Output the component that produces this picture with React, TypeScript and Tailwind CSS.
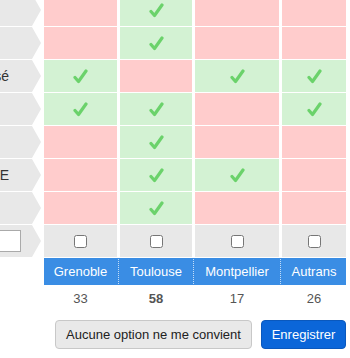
import React from "react";

type C = "p" | "g";
const rows: { label: string; cells: C[] }[] = [
  { label: "", cells: ["p", "g", "p", "p"] },
  { label: "", cells: ["p", "g", "p", "p"] },
  { label: "Non précisé", cells: ["g", "p", "g", "g"] },
  { label: "", cells: ["g", "g", "p", "g"] },
  { label: "", cells: ["p", "g", "p", "p"] },
  { label: "STAGE LIBRE", cells: ["p", "g", "g", "p"] },
  { label: "", cells: ["p", "g", "p", "p"] },
];

const widths = ["w-[73px]", "w-[72px]", "w-[84px]", "w-[64px]"];
const cities = ["Grenoble", "Toulouse", "Montpellier", "Autrans"];
const counts = ["33", "58", "17", "26"];

const arrow =
  "[clip-path:polygon(0_0,32px_0,41px_50%,32px_100%,0_100%)]";

function Check() {
  return (
    <svg width="15" height="15" viewBox="0 0 15 15">
      <path
        d="M2 8.5 L5.5 12.5 L13 2"
        fill="none"
        stroke="#6bd26b"
        strokeWidth="3.2"
        strokeLinecap="round"
        strokeLinejoin="round"
      />
    </svg>
  );
}

export default function App() {
  return (
    <div className="w-[350px] h-[358px] overflow-hidden bg-white font-['Liberation_Sans',Arial,sans-serif]">
      <div className="-mt-[6px] w-[346px] flex flex-col gap-[1px]">
        {rows.map((r, i) => (
          <div key={i} className="flex gap-[3px] h-[32px]">
            <div
              className={`w-[41px] h-full shrink-0 bg-[#e8e8e8] overflow-hidden flex items-center justify-end pr-[32px] ${arrow}`}
            >
              {r.label && (
                <span className="whitespace-nowrap shrink-0 text-[14px] text-[#333]">
                  {r.label}
                </span>
              )}
            </div>
            {r.cells.map((c, j) => (
              <div
                key={j}
                className={`${widths[j]} h-full shrink-0 flex items-center justify-center ${
                  c === "g" ? "bg-[#d3f2d3]" : "bg-[#ffcccc]"
                }`}
              >
                {c === "g" && <Check />}
              </div>
            ))}
          </div>
        ))}
        <div className="flex gap-[3px] h-[32px]">
          <div
            className={`w-[41px] h-full shrink-0 bg-[#e8e8e8] overflow-hidden flex items-center justify-end pr-[20px] ${arrow}`}
          >
            <input
              type="text"
              className="shrink-0 w-[60px] h-[22px] bg-white border border-[#aaa]"
            />
          </div>
          {widths.map((w, j) => (
            <div
              key={j}
              className={`${w} h-full shrink-0 bg-[#e8e8e8] flex items-center justify-center`}
            >
              <input type="checkbox" className="w-[13px] h-[13px] m-0" />
            </div>
          ))}
        </div>
        <div className="flex h-[27px]">
          <div className="w-[44px] shrink-0" />
          <div className="flex bg-[#3a8de4] text-white text-[13px]">
            {cities.map((c, j) => (
              <React.Fragment key={j}>
                {j > 0 && (
                  <div className="w-[3px] flex justify-center py-[1px]">
                    <div className="h-full border-l border-dotted border-white/70" />
                  </div>
                )}
                <div
                  className={`${widths[j]} h-full shrink-0 flex items-center justify-center`}
                >
                  {c}
                </div>
              </React.Fragment>
            ))}
          </div>
        </div>
      </div>
      <div className="flex gap-[3px] h-[27px] w-[346px] text-[13px] text-[#555]">
        <div className="w-[41px] shrink-0" />
        {counts.map((n, j) => (
          <div
            key={j}
            className={`${widths[j]} shrink-0 flex items-center justify-center ${
              j === 1 ? "font-bold" : ""
            }`}
          >
            {n}
          </div>
        ))}
      </div>
      <div className="mt-[8px] w-[346px] flex justify-end gap-[9px]">
        <button className="w-[197px] h-[29px] rounded-[4px] bg-[#e9e9e9] border border-[#c8c8c8] text-[13px] text-[#222] flex items-center justify-center">
          Aucune option ne me convient
        </button>
        <button className="w-[85px] h-[29px] rounded-[4px] bg-[#0b66d9] border border-[#0a58bd] text-[13px] text-white flex items-center justify-center">
          Enregistrer
        </button>
      </div>
    </div>
  );
}
